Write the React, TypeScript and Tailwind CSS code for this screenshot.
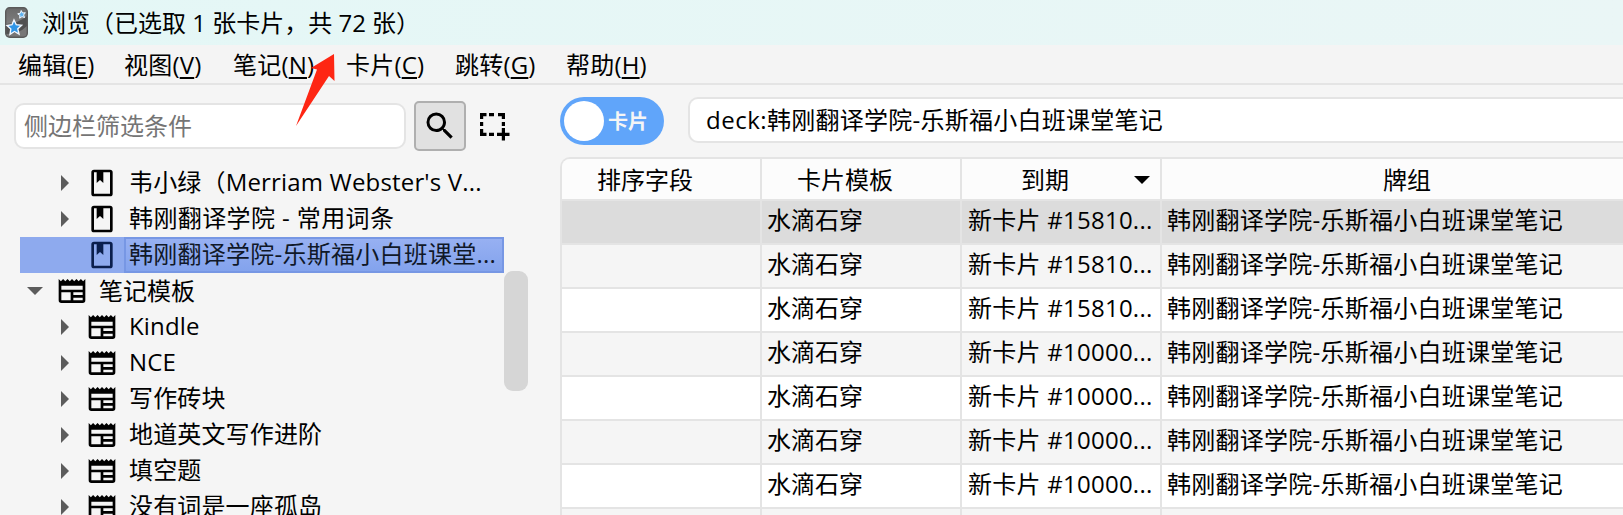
import React from 'react'

const menus = [
    { label: '编辑', key: 'E', width: 'w-[106px]' },
    { label: '视图', key: 'V', width: 'w-[109px]' },
    { label: '笔记', key: 'N', width: 'w-[113px]' },
    { label: '卡片', key: 'C', width: 'w-[109px]' },
    { label: '跳转', key: 'G', width: 'w-[111px]' },
    { label: '帮助', key: 'H', width: 'w-[110px]' },
]

const decks = [
    { name: "韦小绿（Merriam Webster's V...", selected: false, tracking: 'tracking-[0.17px]' },
    { name: '韩刚翻译学院 - 常用词条', selected: false, tracking: 'tracking-[0.4px]' },
    { name: '韩刚翻译学院-乐斯福小白班课堂...', selected: true, tracking: 'tracking-[0.25px]' },
]

const noteTypes = ['Kindle', 'NCE', '写作砖块', '地道英文写作进阶', '填空题', '没有词是一座孤岛']

const rows = ['#15810...', '#15810...', '#15810...', '#10000...', '#10000...', '#10000...', '#10000...']

function DeckIcon({ className }: { className: string }) {
    return (
        <svg viewBox="0 0 24 24" className={`w-8 h-8 shrink-0 ${className}`} fill="currentColor">
            <path d="M18,2A2,2 0 0,1 20,4V20A2,2 0 0,1 18,22H6A2,2 0 0,1 4,20V4A2,2 0 0,1 6,2H18M18,4H13V12L10.5,9.75L8,12V4H6V20H18V4Z" />
        </svg>
    )
}

function NoteTypeIcon() {
    return (
        <svg viewBox="0 0 24 24" className="w-8 h-8 shrink-0" fill="currentColor">
            <path d="M20,11H4V8H20M20,15H13V13H20M20,19H13V17H20M11,19H4V13H11M20.33,4.67L18.67,3L17,4.67L15.33,3L13.67,4.67L12,3L10.33,4.67L8.67,3L7,4.67L5.33,3L3.67,4.67L2,3V19A2,2 0 0,0 4,21H20A2,2 0 0,0 22,19V3L20.33,4.67Z" />
        </svg>
    )
}

function Arrow() {
    return (
        <svg viewBox="0 0 8 16" className="w-2 h-4 shrink-0" fill="#5c5c5c">
            <path d="M0 0L8 8L0 16Z" />
        </svg>
    )
}

export default function App() {
    return (
        <div className="relative flex flex-col w-[1623px] h-[515px] overflow-hidden bg-[#f5f5f5] text-black text-2xl leading-9 whitespace-pre font-['Open_Sans','Noto_Sans_CJK_SC',sans-serif]">
            {/* 标题栏 */}
            <div className="flex items-center h-[45px] shrink-0 pl-[5px] bg-linear-to-r from-[#e4f7f6] to-[#eaf6f6]">
                <svg viewBox="0 0 23 31" className="w-[23px] h-[31px]">
                    <defs>
                        <linearGradient id="logo" x1="0" y1="0" x2="0" y2="1">
                            <stop offset="0" stopColor="#6a6a6a" />
                            <stop offset="1" stopColor="#8e8e8e" />
                        </linearGradient>
                    </defs>
                    <rect x="0.7" y="0.7" width="21.6" height="29.6" rx="4" fill="url(#logo)" />
                    <path d="M1 17Q14 16 22 9V27Q22 30 19 30H4Q1 30 1 27Z" fill="#505050" />
                    <path d="M1 27Q14 27 22 19V27Q22 30 19 30H4Q1 30 1 27Z" fill="#777" />
                    <rect x="0.7" y="0.7" width="21.6" height="29.6" rx="4" fill="none" stroke="#5a5a5a" strokeWidth="1.4" />
                    <path d="M9 13L11.3 17.7L16.6 18.2L12.8 21.8L14 27L9.5 24.5L5 27.3L5.8 22L2 18.5L7 17.7Z" fill="#2f95e6" stroke="#f2f8ff" strokeWidth="1.4" />
                    <path d="M16.2 3.5L17.6 6L20.3 5.7L18.6 8L19.6 10.6L17 9.6L14.7 11.2L14.9 8.3L12.7 6.8L15.4 6.2Z" fill="#5fb2ee" stroke="#f2f8ff" />
                </svg>
                <div className="ml-[14px] mt-px">浏览（已选取 1 张卡片，共 72 张）</div>
            </div>

            {/* 菜单 */}
            <div className="flex items-center h-10 shrink-0 pl-[18px] pt-[2px] border-b-2 border-[#e4e4e4] bg-[#f4f4f4] tracking-[0.2px]">
                {menus.map((m) => (
                    <div key={m.key} className={`${m.width} shrink-0`}>
                        {m.label}(<span className="underline decoration-2 underline-offset-3">{m.key}</span>)
                    </div>
                ))}
            </div>

            <div className="flex flex-1 min-h-0">
                {/* 侧边栏 */}
                <div className="w-[560px] shrink-0 flex flex-col pt-4">
                    <div className="flex items-center h-[50px] shrink-0 pl-[14px]">
                        <div className="flex items-center w-[392px] h-[46px] rounded-[10px] border-2 border-[#e4e4e4] bg-white pl-2 text-[#757575]">侧边栏筛选条件</div>
                        <button className="flex items-center justify-center ml-2 w-[52px] h-[50px] rounded-[5px] border-2 border-[#afafaf] bg-[#e1e1e1]">
                            <svg viewBox="0 0 24 24" className="w-9 h-9" fill="currentColor">
                                <path d="M9.5,3A6.5,6.5 0 0,1 16,9.5C16,11.11 15.41,12.59 14.44,13.73L14.71,14H15.5L20.5,19L19,20.5L14,15.5V14.71L13.73,14.44C12.59,15.41 11.11,16 9.5,16A6.5,6.5 0 0,1 3,9.5A6.5,6.5 0 0,1 9.5,3M9.5,5C7,5 5,7 5,9.5C5,12 7,14 9.5,14C12,14 14,12 14,9.5C14,7 12,5 9.5,5Z" />
                            </svg>
                        </button>
                        <svg viewBox="0 0 30 28" className="ml-[14px] mt-px w-[30px] h-7" fill="none" stroke="currentColor" strokeWidth="3.2">
                            <path d="M0 1.6H6.500M9 1.6H14M18 1.6H25M1.6 0V6M1.6 9V13M1.6 16V23M0 21.4H6.500M9 21.4H14M23.4 0V6M23.4 9V13M23.4 15V27.500M17 21.4H29.500" />
                        </svg>
                    </div>

                    <div className="flex mt-[14px]">
                        <div className="w-[484px] ml-5 shrink-0">
                            {decks.map((d) => (
                                <div key={d.name} className={`flex items-center h-9 ${d.selected ? 'bg-[#8eaaee] text-[#101828]' : ''}`}>
                                    <div className="w-[66px] pl-[41px] shrink-0">{!d.selected && <Arrow />}</div>
                                    <DeckIcon className={d.selected ? 'text-[#0b1f4d]' : ''} />
                                    <div className={`flex items-center ml-[6px] h-9 flex-1 border-2 pl-[3px] pb-[2px] ${d.tracking} ${d.selected ? 'border-[#7797e4] bg-linear-to-b from-[#97b0f2] to-[#83a3ed]' : 'border-transparent'}`}>{d.name}</div>
                                </div>
                            ))}
                            <div className="flex items-center h-9">
                                <svg viewBox="0 0 16 8" className="ml-[7px] w-4 h-2" fill="#5c5c5c">
                                    <path d="M0 0H16L8 8Z" />
                                </svg>
                                <div className="ml-[13px] flex items-center">
                                    <NoteTypeIcon />
                                    <span className="ml-[11px] pb-px">笔记模板</span>
                                </div>
                            </div>
                            {noteTypes.map((n) => (
                                <div key={n} className="flex items-center h-9">
                                    <div className="w-[66px] pl-[41px] shrink-0"><Arrow /></div>
                                    <NoteTypeIcon />
                                    <span className="ml-[11px] pb-[2px] tracking-[0.15px]">{n}</span>
                                </div>
                            ))}
                        </div>
                        <div className="mt-[106px] w-6 h-[120px] rounded-[9px] bg-[#d6d6d6]" />
                    </div>
                </div>

                {/* 卡片列表 */}
                <div className="flex flex-col flex-1 pt-3 min-w-0">
                    <div className="flex h-12 shrink-0">
                        <div className="flex items-center w-[104px] h-12 rounded-full bg-[#60a5fa] pl-1 shrink-0">
                            <div className="w-10 h-10 rounded-full bg-white" />
                            <span className="ml-1 mt-[2px] text-xl font-bold text-[#f5f5f5]">卡片</span>
                        </div>
                        <div className="flex items-center ml-6 flex-1 h-[46px] rounded-l-[10px] border-2 border-r-0 border-[#e4e4e4] bg-white pl-4 tracking-[0.25px]"><span className="tracking-[0.5px]">deck:</span>韩刚翻译学院-乐斯福小白班课堂笔记</div>
                    </div>
                    <div className="mt-3 border-l-2 border-t-2 border-[#e4e4e4] rounded-tl-[10px] overflow-hidden">
                        <div className="flex h-[42px] border-b-2 border-[#e4e4e4] bg-[#fcfcfc]">
                            <div className="flex items-center w-[200px] shrink-0 border-r-2 border-[#e4e4e4] pl-[35px] pt-px">排序字段</div>
                            <div className="flex items-center w-[200px] shrink-0 border-r-2 border-[#e4e4e4] pl-[35px] pt-px">卡片模板</div>
                            <div className="flex items-center justify-between w-[200px] shrink-0 border-r-2 border-[#e4e4e4] pl-[59px] pr-[10px] pt-px">
                                到期
                                <svg viewBox="0 0 16 8" className="w-4 h-2">
                                    <path d="M0 0H16L8 8Z" />
                                </svg>
                            </div>
                            <div className="flex items-center pl-[221px] pt-px">牌组</div>
                        </div>
                        {rows.map((due, i) => (
                            <div key={i} className={`flex h-11 border-b-2 border-[#e4e4e4] ${i === 0 ? 'bg-[#dcdcdc]' : i % 2 ? 'bg-[#f5f5f5]' : 'bg-white'}`}>
                                <div className="w-[200px] shrink-0 border-r-2 border-[#e4e4e4]" />
                                <div className="flex items-center w-[200px] shrink-0 border-r-2 border-[#e4e4e4] pl-[5px] pb-1">水滴石穿</div>
                                <div className="flex items-center w-[200px] shrink-0 border-r-2 border-[#e4e4e4] pl-[6px] pb-1 tracking-[0.25px]">新卡片 {due}</div>
                                <div className="flex items-center pl-[5px] pb-1 tracking-[0.25px]">韩刚翻译学院-乐斯福小白班课堂笔记</div>
                            </div>
                        ))}
                        <div className="flex h-11 bg-[#f5f5f5]">
                            <div className="w-[200px] border-r-2 border-[#e4e4e4]" />
                            <div className="w-[200px] border-r-2 border-[#e4e4e4]" />
                            <div className="w-[200px] border-r-2 border-[#e4e4e4]" />
                        </div>
                    </div>
                </div>
            </div>

            {/* 红色箭头 */}
            <svg viewBox="0 0 40 72" className="absolute left-[296px] top-[54px] w-10 h-[72px]" fill="#fe2613">
                <path d="M38 0L15 14L21 15.500L0 72L33 22L38.500 27Z" />
            </svg>
        </div>
    )
}
